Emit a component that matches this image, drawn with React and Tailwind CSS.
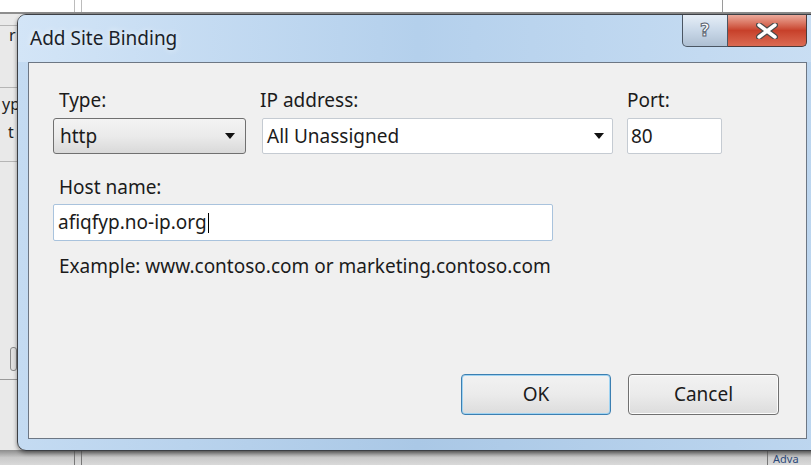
import React from 'react';

function ComboArrow() {
  return (
    <svg width="10" height="6" viewBox="0 0 10 6" className="shrink-0">
      <path d="M0 0h10L5 6z" fill="#111" />
    </svg>
  );
}

function CaptionButtons() {
  return (
    <div className="flex self-start h-[32px]">
      <div className="w-[46px] h-full border border-[#4b5663] border-t-0 rounded-bl-[5px] bg-gradient-to-b from-[#e6eef7] via-[#c9d8e8] to-[#aebfd2] flex items-center justify-center">
        <span className="text-[17px] font-bold leading-none text-white [-webkit-text-stroke:1px_#5a6470] font-['DejaVu_Sans',sans-serif]">?</span>
      </div>
      <div className="w-[79px] h-full border border-[#4b3a3a] border-t-0 border-l-0 rounded-br-[5px] bg-gradient-to-b from-[#eaa99b] via-[#c7402a] to-[#db6a52] flex items-center justify-center">
        <svg width="22" height="16" viewBox="0 0 22 16">
          <path d="M3 2l16 12M19 2L3 14" stroke="#4a4a4a" strokeWidth="6" strokeLinecap="round" />
          <path d="M3 2l16 12M19 2L3 14" stroke="#fff" strokeWidth="3.5" strokeLinecap="round" />
        </svg>
      </div>
    </div>
  );
}

function Field({ children, className = '' }) {
  return (
    <div className={`h-[36px] flex items-center bg-white border border-[#c5cbd2] rounded-[2px] ${className}`}>
      {children}
    </div>
  );
}

export default function App() {
  return (
    <div className="relative w-[811px] h-[465px] overflow-hidden bg-[#e9e9e9] font-['Noto_Sans',sans-serif] text-[#1b1b1b]">

      {/* application behind the dialog */}
      <div className="flex flex-col h-full">
        <div className="h-[14px] bg-white border-b-2 border-[#8d8d8d] flex">
          <div className="w-[75px] border-r border-[#bcbcbc]" />
          <div className="w-[7px] border-r border-[#bcbcbc]" />
          <div className="w-[640px]" />
          <div className="w-[6px] border-l border-[#9a9a9a]" />
        </div>
        <div className="flex-1 flex">
          <div className="w-[17px] flex flex-col text-[16px] leading-none text-[#222]">
            <div className="h-[12px] border-b border-[#b5b5b5]" />
            <div className="pt-[1px] pl-[9px] h-[62px] border-b border-[#b5b5b5]">r</div>
            <div className="pt-[8px] pl-[2px] h-[34px]">yp</div>
            <div className="pt-[2px] pl-[8px] h-[40px] border-b border-[#b5b5b5]">t</div>
            <div className="h-[185px]" />
            <div className="ml-[10px] h-[24px] border border-[#8a8a8a] rounded-[3px] bg-[#e0e0e0]" />
            <div className="mt-[8px] border-b border-[#9a9a9a]" />
          </div>
        </div>
        <div className="h-[15px] bg-gradient-to-b from-[#8c8c8c] via-[#c9c9c9] to-[#d9d9d9] flex">
          <div className="w-[75px] border-r border-[#777]" />
          <div className="w-[7px] border-r border-[#777]" />
          <div className="flex-1" />
          <div className="w-[6px] border-l border-[#777]" />
          <div className="w-[38px] text-[11px] leading-[11px] text-[#2d4a7a] pt-[3px]">Adva</div>
        </div>
      </div>

      {/* dialog window */}
      <div className="absolute left-[17px] top-[14px] w-[801px] h-[437px] flex flex-col rounded-l-[9px] border border-[#3c3f44] bg-gradient-to-r from-[#c4dbf2] via-[#aac8e6] to-[#bdd6ef] shadow-[0_2px_4px_rgba(0,0,0,0.45)]">
        <div className="h-[47px] flex rounded-tl-[8px] bg-gradient-to-r from-[#d3e5f7] via-[#b4d0ec] to-[#c9def3]">
          <div className="flex-1 pl-[12px] pt-[11px] text-[19px] leading-[24px] text-[#1a1f2a] [text-shadow:0_0_6px_rgba(255,255,255,0.9)]">
            Add Site Binding
          </div>
          <div className="pr-[10px]">
            <CaptionButtons />
          </div>
        </div>

        <div className="flex-1 flex pl-[10px] pr-[10px] pb-[11px]">
          <div className="flex-1 flex flex-col border border-[#6d7784] bg-[#f0f0f0] pl-[24px] pr-[27px] pt-[25px] pb-[23px] text-[19px]">

            <div className="flex">
              <div className="w-[193px] flex flex-col">
                <div className="h-[24px] leading-[24px] pl-[6px]">Type:</div>
                <div className="mt-[6px] h-[36px] flex items-center justify-between pl-[6px] pr-[10px] border border-[#707070] rounded-[3px] bg-gradient-to-b from-[#f3f3f3] via-[#ebebeb] to-[#d9d9d9]">
                  <span>http</span>
                  <ComboArrow />
                </div>
              </div>
              <div className="ml-[16px] w-[351px] flex flex-col">
                <div className="h-[24px] leading-[24px] -ml-[2px]">IP address:</div>
                <Field className="mt-[6px] justify-between pl-[4px] pr-[8px]">
                  <span>All Unassigned</span>
                  <ComboArrow />
                </Field>
              </div>
              <div className="ml-[14px] w-[95px] flex flex-col">
                <div className="h-[24px] leading-[24px]">Port:</div>
                <Field className="mt-[6px] pl-[3px]">
                  <span>80</span>
                </Field>
              </div>
            </div>

            <div className="mt-[21px] h-[24px] leading-[24px] pl-[6px]">Host name:</div>
            <div className="mt-[5px] w-[500px] h-[37px] flex items-center pl-[4px] bg-white border border-[#a9c3dd] rounded-[2px]">
              <span>afiqfyp.no-ip.org</span>
              <span className="w-[1px] h-[20px] bg-black ml-[1px]" />
            </div>

            <div className="mt-[13px] h-[24px] leading-[24px] pl-[6px]">Example: www.contoso.com or marketing.contoso.com</div>

            <div className="flex-1" />

            <div className="flex justify-end gap-[17px]">
              <button className="w-[150px] h-[41px] rounded-[4px] border border-[#3c7fb1] shadow-[inset_0_0_0_1px_#9fd3f2] bg-gradient-to-b from-[#f2f2f2] via-[#ebebeb] to-[#dcdcdc] text-[19px] text-[#1b1b1b]">
                OK
              </button>
              <button className="w-[151px] h-[41px] rounded-[4px] border border-[#707070] shadow-[inset_0_0_0_1px_#fcfcfc] bg-gradient-to-b from-[#f2f2f2] via-[#ebebeb] to-[#dcdcdc] text-[19px] text-[#1b1b1b]">
                Cancel
              </button>
            </div>
          </div>
        </div>
      </div>
    </div>
  );
}
